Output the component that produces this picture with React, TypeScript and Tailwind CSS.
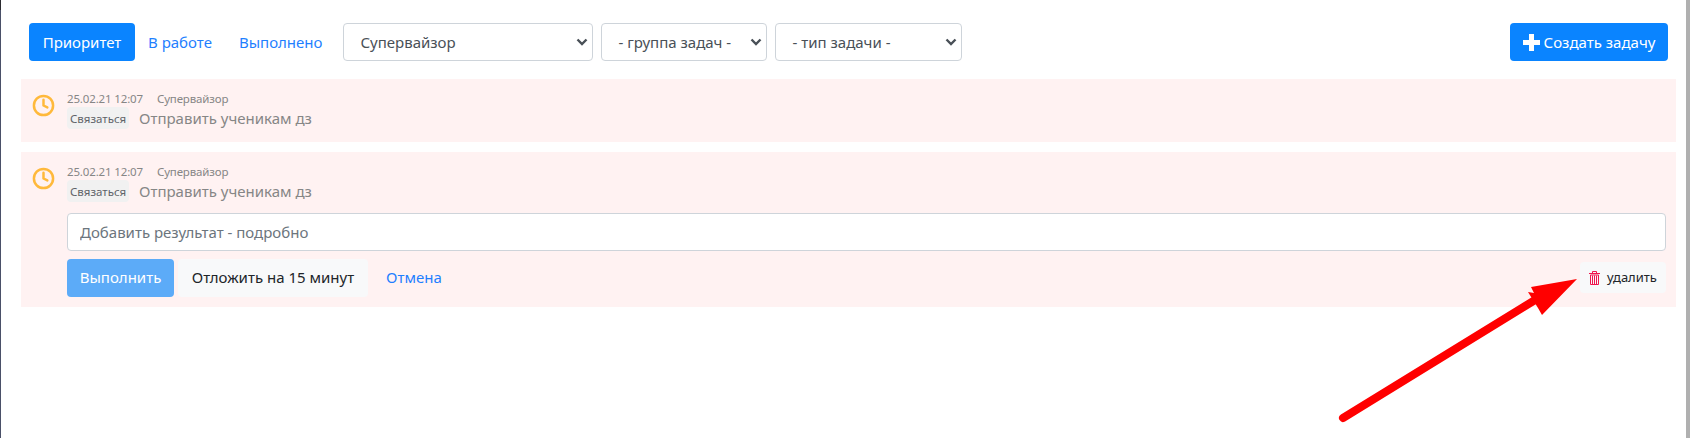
import { Clock } from 'lucide-react';

const filters = [
  { label: 'Супервайзор', width: 'w-[250px]' },
  { label: '- группа задач -', width: 'w-[166px]' },
  { label: '- тип задачи -', width: 'w-[187px]' },
];

function Filter({ label, width }: { label: string; width: string }) {
  return (
    <div className={`relative ${width}`}>
      <select className="h-[38px] w-full appearance-none rounded border border-[#ced4da] bg-white pl-[16px] text-[15px] text-[#495057] outline-none">
        <option>{label}</option>
      </select>
      <svg
        className="pointer-events-none absolute right-[5px] top-[14px] h-[10px] w-[12px]"
        viewBox="0 0 12 10"
        fill="none"
        stroke="#495057"
        strokeWidth="2.4"
      >
        <path d="M1.5 2.5 6 7l4.5-4.5" />
      </svg>
    </div>
  );
}

function TaskHead() {
  return (
    <div className="flex">
      <div className="flex w-[46px] justify-center pr-[2px] pt-[4px]">
        <Clock className="h-[23px] w-[23px] text-[#ffb93b]" strokeWidth={2.6} />
      </div>
      <div>
        <div className="flex h-[17px] items-center gap-[14px] text-[11.5px] tracking-[-0.15px] text-[#868686]">
          <span>25.02.21 12:07</span>
          <span>Супервайзор</span>
        </div>
        <div className="flex items-center gap-[10px]">
          <span className="flex h-[22px] w-[62px] items-center justify-center rounded bg-[#f1f1f1] text-[11.5px] text-[#5f6368]">
            Связаться
          </span>
          <span className="text-[15px] text-[#868686]">Отправить ученикам дз</span>
        </div>
      </div>
    </div>
  );
}

export default function App() {
  return (
    <div className="flex h-[438px] bg-white font-['Noto_Sans',sans-serif]">
      <div className="w-px bg-[#4a5068]">
        <div className="h-[10px] bg-[#2b2b30]" />
      </div>
      <div className="relative flex-1">
        <div className="flex items-center pl-[28px] pr-[9px] pt-[23px]">
          <div className="flex h-[38px] w-[106px] items-center justify-center rounded bg-[#0a84ff] text-[15px] text-white">
            Приоритет
          </div>
          <a className="ml-[13px] text-[15px] text-[#1f7fff]">В работе</a>
          <a className="ml-[27px] text-[15px] text-[#1f7fff]">Выполнено</a>
          <div className="ml-[21px] flex gap-[8px]">
            {filters.map(f => (
              <Filter key={f.label} {...f} />
            ))}
          </div>
          <div className="ml-auto flex h-[38px] w-[158px] items-center justify-center gap-[4px] rounded bg-[#0a84ff] text-[15px] text-white">
            <svg className="h-[17px] w-[17px]" viewBox="0 0 17 17" stroke="currentColor" strokeWidth="5" fill="none">
              <path d="M8.5 0v17M0 8.5h17" />
            </svg>
            Создать задачу
          </div>
        </div>

        <div className="ml-[20px] mr-px mt-[18px] flex flex-col gap-[10px]">
          <div className="h-[63px] bg-[#fff2f2] pt-[11px]">
            <TaskHead />
          </div>

          <div className="h-[155px] bg-[#fff2f2] pt-[11px]">
            <TaskHead />
            <div className="ml-[46px] mr-[10px] mt-[10px]">
              <input
                className="h-[38px] w-full rounded border border-[#ced4da] bg-white px-[12px] text-[15px] outline-none placeholder:text-[#6c757d]"
                placeholder="Добавить результат - подробно"
              />
              <div className="mt-[8px] flex items-center">
                <div className="flex h-[38px] w-[107px] items-center justify-center rounded bg-[#5cabf8] text-[15px] text-white">
                  Выполнить
                </div>
                <div className="ml-[4px] flex h-[38px] w-[190px] items-center justify-center rounded bg-[#f8f9fa] text-[15px] text-[#212529]">
                  Отложить на 15 минут
                </div>
                <a className="ml-[18px] text-[15px] text-[#1f7fff]">Отмена</a>
                <div className="ml-auto flex h-[31px] w-[86px] items-center justify-center gap-[7px] rounded bg-[#f8f9fa] text-[13px] text-[#212529]">
                  <svg className="h-[14px] w-[11px]" viewBox="0 0 11 14" fill="none" stroke="#f0164f">
                    <path d="M0 2.5h11M3.5 2V.5h4V2" strokeWidth="1" />
                    <path d="M1.5 4v9.5h8V4z" strokeWidth="1" />
                    <path d="M3.5 4.5v8.5M5.5 4.5v8.5M7.5 4.5v8.5" strokeWidth="1" />
                  </svg>
                  удалить
                </div>
              </div>
            </div>
          </div>
        </div>

        {/* red arrow drawn on top of the screenshot */}
        <svg className="pointer-events-none absolute left-0 top-0 h-[438px] w-[1676px]" viewBox="0 0 1676 438">
          <path d="M1342 418 1534 300" stroke="#ff0000" strokeWidth="8" strokeLinecap="round" fill="none" />
          <polygon points="1576,279 1530,287 1533,293 1527,292 1537,308 1541,315" fill="#ff0000" />
        </svg>
      </div>
      <div className="ml-[9px] w-[4px] bg-[#b0b0b0]" />
    </div>
  );
}
